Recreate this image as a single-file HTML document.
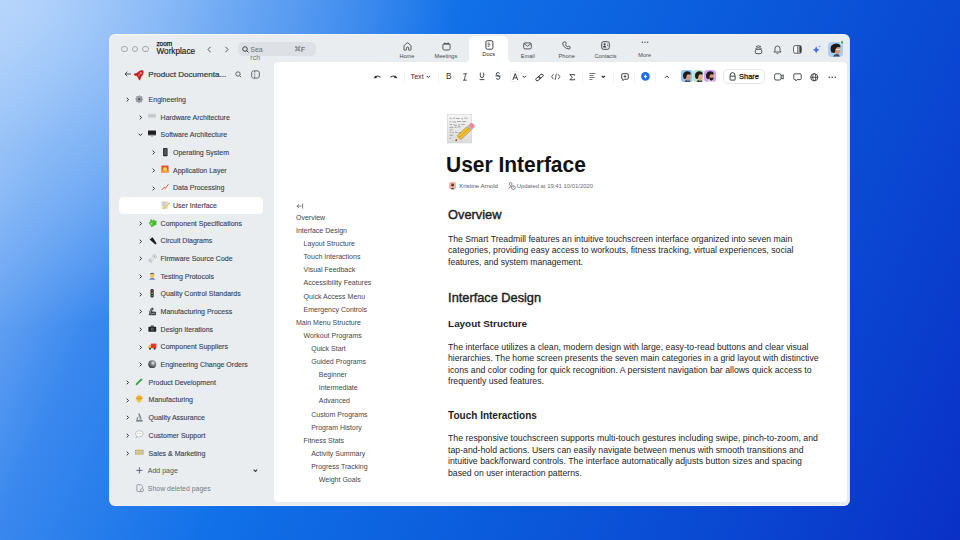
<!DOCTYPE html><html><head><meta charset="utf-8"><style>
*{margin:0;padding:0;box-sizing:border-box}
html,body{width:960px;height:540px;overflow:hidden}
body{font-family:"Liberation Sans",sans-serif;position:relative;
background:radial-gradient(ellipse 460px 330px at 0 0,rgba(184,214,252,0.85) 0%,rgba(160,200,248,0.55) 45%,rgba(140,190,246,0) 100%),linear-gradient(115deg,#b2d3fb 0%,#6ca6f3 10%,#3a88ee 20%,#1170e8 38%,#0b5cdc 60%,#0a48d2 80%,#0a30c6 100%)}
.t{position:absolute;white-space:nowrap;line-height:1}
.abs{position:absolute}
#win{position:absolute;left:110.3px;top:34.6px;width:739.2px;height:470.9px;background:#e9edf0;border-radius:5px;box-shadow:0 0 0 0.9px rgba(255,251,236,0.95)}
#panel{position:absolute;left:273.7px;top:62.2px;width:573px;height:440px;background:#fff;border-radius:4px;box-shadow:0 0 1.5px rgba(0,0,0,0.06)}
svg{position:absolute;overflow:visible}
</style></head><body>
<div id="win"></div>
<div id="panel"></div>
<div class="abs" style="left:121.45px;top:45.70px;width:6.60px;height:6.60px;border-radius:50%;border:0.8px solid #a3a7ad"></div>
<div class="abs" style="left:131.70px;top:45.70px;width:6.60px;height:6.60px;border-radius:50%;border:0.8px solid #a3a7ad"></div>
<div class="abs" style="left:141.95px;top:45.70px;width:6.60px;height:6.60px;border-radius:50%;border:0.8px solid #a3a7ad"></div>
<div class="t" style="left:156.40px;top:41.09px;font-size:6.5px;color:#1a1a1a;font-weight:normal;-webkit-text-stroke:0.25px #1a1a1a;letter-spacing:-0.05px">zoom</div>
<div class="t" style="left:156.50px;top:48.25px;font-size:8.2px;color:#1a1a1a;font-weight:normal;-webkit-text-stroke:0.15px #1a1a1a">Workplace</div>
<svg style="left:206.50px;top:46.00px;" width="5" height="7" viewBox="0 0 5 7"><path d="M3.5 0.8 L1 3.5 L3.5 6.2" fill="none" stroke="#3c3f45" stroke-width="0.9"/></svg>
<svg style="left:224.00px;top:46.00px;" width="5" height="7" viewBox="0 0 5 7"><path d="M1.5 0.8 L4 3.5 L1.5 6.2" fill="none" stroke="#3c3f45" stroke-width="0.9"/></svg>
<div class="abs" style="left:238.00px;top:42.00px;width:78.00px;height:14.00px;background:#dde0e5;border-radius:5px"></div>
<svg style="left:241.50px;top:45.50px;" width="7" height="7" viewBox="0 0 7 7"><circle cx="3" cy="3" r="2.3" fill="none" stroke="#30343a" stroke-width="0.9"/><path d="M4.7 4.7 L6.5 6.5" stroke="#30343a" stroke-width="0.9"/></svg>
<div class="t" style="left:250.30px;top:45.67px;font-size:7px;color:#6b7079;font-weight:normal;">Sea</div>
<div class="t" style="left:250.30px;top:53.67px;font-size:7px;color:#6b7079;font-weight:normal;">rch</div>
<svg style="left:295.30px;top:46.20px;" width="5.5" height="5.5" viewBox="0 0 5.5 5.5"><path d="M1.75 1.75 H3.75 V3.75 H1.75 Z" fill="none" stroke="#5f646c" stroke-width="0.6"/><circle cx="1.05" cy="1.05" r="0.7" fill="none" stroke="#5f646c" stroke-width="0.6"/><circle cx="4.45" cy="1.05" r="0.7" fill="none" stroke="#5f646c" stroke-width="0.6"/><circle cx="1.05" cy="4.45" r="0.7" fill="none" stroke="#5f646c" stroke-width="0.6"/><circle cx="4.45" cy="4.45" r="0.7" fill="none" stroke="#5f646c" stroke-width="0.6"/></svg>
<div class="t" style="left:301.00px;top:47.01px;font-size:6.6px;color:#5f646c;font-weight:normal;-webkit-text-stroke:0.15px #5f646c">F</div>
<div class="abs" style="left:469.4px;top:36px;width:38.6px;height:27px;background:#fff;border-radius:5px 5px 0 0"></div>
<div class="abs" style="left:464.4px;top:57.5px;width:5px;height:5px;background:radial-gradient(circle at 0 0, transparent 4.6px, #fff 5px)"></div>
<div class="abs" style="left:508px;top:57.5px;width:5px;height:5px;background:radial-gradient(circle at 100% 0, transparent 4.6px, #fff 5px)"></div>
<div class="t" style="left:399.43px;top:54.16px;font-size:5.6px;color:#464a50;font-weight:normal;">Home</div>
<div class="t" style="left:434.54px;top:54.16px;font-size:5.6px;color:#464a50;font-weight:normal;">Meetings</div>
<div class="t" style="left:482.37px;top:51.86px;font-size:5.6px;color:#25282d;font-weight:normal;">Docs</div>
<div class="t" style="left:520.80px;top:54.16px;font-size:5.6px;color:#464a50;font-weight:normal;">Email</div>
<div class="t" style="left:558.60px;top:54.16px;font-size:5.6px;color:#464a50;font-weight:normal;">Phone</div>
<div class="t" style="left:594.45px;top:54.16px;font-size:5.6px;color:#464a50;font-weight:normal;">Contacts</div>
<div class="t" style="left:638.32px;top:52.76px;font-size:5.6px;color:#464a50;font-weight:normal;">More</div>
<svg style="left:402.50px;top:41.60px;" width="9" height="9" viewBox="0 0 9 9"><path d="M1 7.6 V4 Q1 3.5 1.4 3.2 L4 1 Q4.5 0.6 5 1 L7.6 3.2 Q8 3.5 8 4 V7.6 Q8 8.2 7.4 8.2 H6 Q5.6 8.2 5.6 7.8 V6.1 Q5.6 5 4.5 5 Q3.4 5 3.4 6.1 V7.8 Q3.4 8.2 3 8.2 H1.6 Q1 8.2 1 7.6 Z" fill="none" stroke="#3c3f45" stroke-width="0.85" stroke-linejoin="round"/></svg>
<svg style="left:441.50px;top:41.80px;" width="9" height="9" viewBox="0 0 9 9"><rect x="0.9" y="1.6" width="7.2" height="6.4" rx="1.6" fill="none" stroke="#3c3f45" stroke-width="0.9"/><path d="M1.6 2.4 H7.4" stroke="#3c3f45" stroke-width="0.6"/><path d="M2.8 0.5 V2 M6.2 0.5 V2" stroke="#3c3f45" stroke-width="0.9"/></svg>
<svg style="left:484.50px;top:39.80px;" width="9" height="10" viewBox="0 0 9 10"><rect x="0.9" y="0.7" width="7" height="8.5" rx="1.4" fill="none" stroke="#2a2d33" stroke-width="0.9"/><path d="M2.6 3.1 H4.6 M2.6 4.7 H5.4 M2.6 6.3 H4.6" stroke="#2a2d33" stroke-width="0.75"/></svg>
<svg style="left:523.30px;top:42.00px;" width="9" height="8" viewBox="0 0 9 8"><rect x="0.7" y="0.9" width="7.6" height="6" rx="1.3" fill="none" stroke="#3c3f45" stroke-width="0.85"/><path d="M1 1.6 L4.5 4.2 L8 1.6" fill="none" stroke="#3c3f45" stroke-width="0.85"/></svg>
<svg style="left:562.20px;top:41.30px;" width="9" height="9" viewBox="0 0 9 9"><path d="M2.4 0.9 L3.5 0.9 L4.3 2.9 L3.4 3.8 Q4.1 5.2 5.4 5.9 L6.2 5 L8.1 5.8 V6.9 Q8.1 8 7 8 Q4.2 7.8 2.4 6 Q0.8 4.4 0.8 2.4 Q0.8 0.9 2.4 0.9 Z" fill="none" stroke="#3c3f45" stroke-width="0.85" stroke-linejoin="round"/></svg>
<svg style="left:601.00px;top:41.30px;" width="9" height="9" viewBox="0 0 9 9"><rect x="0.7" y="0.7" width="7.6" height="7.6" rx="1.8" fill="none" stroke="#3c3f45" stroke-width="0.95"/><circle cx="3.6" cy="3.4" r="1.05" fill="#3c3f45"/><path d="M1.8 6.6 Q2 4.8 3.6 4.8 Q5.2 4.8 5.4 6.6 Z" fill="#3c3f45"/><path d="M6 3.2 H7 M6 4.6 H7" stroke="#3c3f45" stroke-width="0.6"/></svg>
<svg style="left:640.70px;top:41.20px;" width="8" height="3" viewBox="0 0 8 3"><circle cx="1.3" cy="1.3" r="0.7" fill="#3c3f45"/><circle cx="4" cy="1.3" r="0.7" fill="#3c3f45"/><circle cx="6.7" cy="1.3" r="0.7" fill="#3c3f45"/></svg>
<svg style="left:753.80px;top:45.00px;" width="9" height="10" viewBox="0 0 9 10"><path d="M2 1.6 Q4.5 0 7 1.6" fill="none" stroke="#3c3f45" stroke-width="0.85"/><path d="M1.4 3.4 Q4.5 1.9 7.6 3.4" fill="none" stroke="#3c3f45" stroke-width="0.85"/><rect x="1.2" y="4.3" width="6.6" height="4.4" rx="1.8" fill="none" stroke="#3c3f45" stroke-width="0.85"/></svg>
<svg style="left:773.30px;top:44.60px;" width="9" height="10" viewBox="0 0 9 10"><path d="M0.9 7 H8.1 L7 5.6 V3.6 Q7 1 4.5 1 Q2 1 2 3.6 V5.6 Z" fill="none" stroke="#3c3f45" stroke-width="0.85" stroke-linejoin="round"/><path d="M3.6 8.4 Q4.5 9 5.4 8.4" fill="none" stroke="#3c3f45" stroke-width="0.85"/></svg>
<svg style="left:792.80px;top:45.20px;" width="9" height="9" viewBox="0 0 9 9"><defs><linearGradient id="pgr" x1="0" x2="1"><stop offset="0" stop-color="#f4f4f4"/><stop offset="1" stop-color="#1e1f22"/></linearGradient></defs><rect x="0.6" y="0.6" width="7.8" height="7.6" rx="1.6" fill="#fff" stroke="#3c3f45" stroke-width="0.85"/><rect x="4.5" y="1" width="3.5" height="6.8" fill="url(#pgr)"/><path d="M4.5 0.6 V8.2" stroke="#3c3f45" stroke-width="0.6"/></svg>
<svg style="left:811.60px;top:45.00px;" width="10" height="9" viewBox="0 0 10 9"><path d="M4.2 1.2 Q4.7 4.2 7.6 4.8 Q4.7 5.4 4.2 8.4 Q3.7 5.4 0.8 4.8 Q3.7 4.2 4.2 1.2 Z" fill="#3d6df2"/><path d="M7.6 0.2 Q7.8 1.2 8.8 1.4 Q7.8 1.6 7.6 2.6 Q7.4 1.6 6.4 1.4 Q7.4 1.2 7.6 0.2Z" fill="#7aa0f6"/></svg>
<div class="abs" style="left:828.20px;top:42.00px;width:14.80px;height:14.50px;background:#a9cdf7;border-radius:4px"></div>
<svg style="left:828.20px;top:42.00px;" width="14.8" height="14.5" viewBox="0 0 14.8 14.5"><path d="M5 14.5 Q6 11.8 9 11.9 Q11.6 12 12 14.5 Z" fill="#3a4a6a"/><ellipse cx="9.2" cy="8.2" rx="3.1" ry="3.7" fill="#d9956e"/><path d="M3.4 10.6 Q1.6 5.4 3.8 3.2 Q7 0.6 10.8 2 Q13 3 12.4 5.4 Q9.6 4.4 8.2 6 Q7.4 8.4 6.6 11 Z" fill="#1d1a19"/><path d="M7.6 7.6 H12.4" stroke="#eaeaea" stroke-width="0.9"/></svg>
<div class="abs" style="left:839.60px;top:40.40px;width:4.60px;height:4.60px;background:#2fb44a;border-radius:50%;border:0.7px solid #e9edf0"></div>
<svg style="left:372.80px;top:73.00px;" width="9" height="7" viewBox="0 0 9 7"><path d="M2.6 3.9 Q5 1.8 7.4 4.3" fill="none" stroke="#2c2f34" stroke-width="1.05"/><path d="M0.6 5.2 L2.4 2.4 L4 5 Z" fill="#2c2f34"/></svg>
<svg style="left:388.60px;top:73.00px;" width="9" height="7" viewBox="0 0 9 7"><path d="M6.4 3.9 Q4 1.8 1.6 4.3" fill="none" stroke="#2c2f34" stroke-width="1.05"/><path d="M8.4 5.2 L6.6 2.4 L5 5 Z" fill="#2c2f34"/></svg>
<div class="abs" style="left:403.50px;top:71.00px;width:0.60px;height:11.50px;background:#f1f2f4"></div>
<div class="t" style="left:410.60px;top:73.89px;font-size:7.1px;color:#2c2f34;font-weight:normal;">Text</div>
<svg style="left:425.50px;top:75.00px;" width="5" height="4" viewBox="0 0 5 4"><path d="M0.7 0.9 L2.3 2.5 L3.9 0.9" fill="none" stroke="#2c2f34" stroke-width="1.0"/></svg>
<div class="abs" style="left:438.30px;top:71.00px;width:0.60px;height:11.50px;background:#f1f2f4"></div>
<div class="t" style="left:445.90px;top:73.15px;font-size:8.2px;color:#2c2f34;font-weight:normal;">B</div>
<svg style="left:462.00px;top:72.60px;" width="6" height="8" viewBox="0 0 6 8"><path d="M1.2 0.8 H5 M1 7.2 H4.8 M3.6 0.8 L2.4 7.2" fill="none" stroke="#2c2f34" stroke-width="0.8"/></svg>
<svg style="left:478.50px;top:72.40px;" width="6" height="8.5" viewBox="0 0 6 8.5"><path d="M1.3 0.6 V3.8 Q1.3 5.6 3 5.6 Q4.7 5.6 4.7 3.8 V0.6 M0.6 7.6 H5.4" fill="none" stroke="#2c2f34" stroke-width="0.85"/></svg>
<svg style="left:494.50px;top:72.40px;" width="6" height="8.5" viewBox="0 0 6 8.5"><path d="M4.8 1.6 Q4 0.6 3 0.6 Q1.2 0.6 1.2 2.1 Q1.2 3.3 3 3.6 Q4.9 4 4.9 5.6 Q4.9 7.3 3 7.3 Q1.8 7.3 1 6.3 M0.4 4 H5.6" fill="none" stroke="#2c2f34" stroke-width="0.85"/></svg>
<div class="abs" style="left:510.00px;top:71.30px;width:9.20px;height:10.50px;border:0.6px solid #eef0f3;border-radius:2px;background:#fff"></div>
<svg style="left:511.50px;top:72.80px;" width="6.5" height="7.5" viewBox="0 0 6.5 7.5"><path d="M0.8 7 L3.25 0.6 L5.7 7 M1.7 4.8 H4.8" fill="none" stroke="#2c2f34" stroke-width="0.9"/></svg>
<svg style="left:521.70px;top:75.00px;" width="5" height="4" viewBox="0 0 5 4"><path d="M0.7 0.9 L2.3 2.5 L3.9 0.9" fill="none" stroke="#2c2f34" stroke-width="1.0"/></svg>
<svg style="left:534.50px;top:72.50px;" width="9" height="9" viewBox="0 0 9 9"><g transform="rotate(-40 4.5 4.5)" fill="none" stroke="#2c2f34" stroke-width="0.9"><rect x="0.1" y="3.1" width="5" height="2.8" rx="1.4"/><rect x="3.9" y="3.1" width="5" height="2.8" rx="1.4"/></g></svg>
<svg style="left:551.00px;top:73.00px;" width="9.5" height="7.5" viewBox="0 0 9.5 7.5"><path d="M2.4 1.2 L0.6 3.7 L2.4 6.2 M7.1 1.2 L8.9 3.7 L7.1 6.2 M5.3 0.6 L4.2 6.8" fill="none" stroke="#2c2f34" stroke-width="0.8"/></svg>
<svg style="left:568.80px;top:73.60px;" width="7" height="7" viewBox="0 0 7 7"><path d="M5.6 1.6 V0.6 H0.9 L3.3 3.2 L0.9 5.8 H5.6 V4.8" fill="none" stroke="#2c2f34" stroke-width="0.9"/></svg>
<div class="abs" style="left:582.30px;top:71.00px;width:0.60px;height:11.50px;background:#f1f2f4"></div>
<svg style="left:589.00px;top:73.00px;" width="8" height="8" viewBox="0 0 8 8"><path d="M0.5 0.5 H6.5 M0.5 2.5 H4.5 M0.5 4.5 H5.5 M0.5 6.5 H3.5" stroke="#50545a" stroke-width="0.8"/></svg>
<svg style="left:600.70px;top:75.00px;" width="5" height="4" viewBox="0 0 5 4"><path d="M0.7 0.8 L2.3 2.4 L3.9 0.8" fill="none" stroke="#2c2f34" stroke-width="1.15"/></svg>
<div class="abs" style="left:613.30px;top:71.00px;width:0.60px;height:11.50px;background:#f1f2f4"></div>
<svg style="left:620.60px;top:72.60px;" width="8" height="8.5" viewBox="0 0 8 8.5"><path d="M1.9 0.7 H6.1 Q7.3 0.7 7.3 1.9 V5 Q7.3 6.2 6.1 6.2 H3.3 L1.9 7.6 V6.2 Q0.7 6.2 0.7 5 V1.9 Q0.7 0.7 1.9 0.7 Z" fill="none" stroke="#2c2f34" stroke-width="0.9" stroke-linejoin="round"/><path d="M4 2.1 V4.8 M2.65 3.45 H5.35" stroke="#2c2f34" stroke-width="0.8"/></svg>
<div class="abs" style="left:634.20px;top:71.00px;width:0.60px;height:11.50px;background:#f1f2f4"></div>
<svg style="left:640.60px;top:72.10px;" width="9" height="9" viewBox="0 0 9 9"><circle cx="4.4" cy="4.4" r="4.3" fill="#1f6ced"/><path d="M4.4 2 Q4.6 4.2 6.4 4.4 Q4.6 4.6 4.4 6.8 Q4.2 4.6 2.4 4.4 Q4.2 4.2 4.4 2Z" fill="#fff"/></svg>
<div class="abs" style="left:655.40px;top:71.00px;width:0.60px;height:11.50px;background:#f1f2f4"></div>
<svg style="left:663.50px;top:74.60px;" width="6" height="4" viewBox="0 0 6 4"><path d="M0.9 2.9 L2.9 0.9 L4.9 2.9" fill="none" stroke="#2c2f34" stroke-width="0.95"/></svg>
<div class="abs" style="left:681.00px;top:70.20px;width:11.50px;height:12.00px;background:#93c2f6;border-radius:3px;box-shadow:0 0 0 0.5px #fff"></div>
<svg style="left:681.00px;top:70.20px;" width="11.5" height="12" viewBox="0 0 11.5 12"><path d="M3.4499999999999997 12 Q4.6000000000000005 9.600000000000001 7.13 9.84 Q9.200000000000001 10.32 9.43 12 Z" fill="#3a4a6a"/><path d="M5.175 9.36 L7.13 11.399999999999999 L8.28 9.36 Z" fill="#d9956e"/><ellipse cx="6.8999999999999995" cy="6.6000000000000005" rx="2.76" ry="3.3600000000000003" fill="#d9956e"/><path d="M2.875 8.64 Q0.92 4.800000000000001 3.22 2.4000000000000004 Q5.75 0.24 8.625 1.7999999999999998 Q10.35 3.0 9.43 4.800000000000001 Q6.8999999999999995 3.5999999999999996 5.98 5.04 Q5.29 7.4399999999999995 4.6000000000000005 9.0 Z" fill="#1d1a19"/><path d="M5.75 6.0 H9.89" stroke="#d0d0d0" stroke-width="0.6"/></svg>
<div class="abs" style="left:692.60px;top:70.20px;width:11.50px;height:12.00px;background:#b2e8c8;border-radius:3px;box-shadow:0 0 0 0.5px #fff"></div>
<svg style="left:692.60px;top:70.20px;" width="11.5" height="12" viewBox="0 0 11.5 12"><path d="M3.4499999999999997 12 Q4.6000000000000005 9.600000000000001 7.13 9.84 Q9.200000000000001 10.32 9.43 12 Z" fill="#3a3a3a"/><path d="M5.175 9.36 L7.13 11.399999999999999 L8.28 9.36 Z" fill="#e7a882"/><ellipse cx="6.8999999999999995" cy="6.6000000000000005" rx="2.76" ry="3.3600000000000003" fill="#e7a882"/><path d="M2.875 8.64 Q0.92 4.800000000000001 3.22 2.4000000000000004 Q5.75 0.24 8.625 1.7999999999999998 Q10.35 3.0 9.43 4.800000000000001 Q6.8999999999999995 3.5999999999999996 5.98 5.04 Q5.29 7.4399999999999995 4.6000000000000005 9.0 Z" fill="#1d1a19"/><path d="M5.75 6.0 H9.89" stroke="#d0d0d0" stroke-width="0.6"/></svg>
<div class="abs" style="left:704.20px;top:70.20px;width:11.50px;height:12.00px;background:#cfa8f0;border-radius:3px;box-shadow:0 0 0 0.5px #fff"></div>
<svg style="left:704.20px;top:70.20px;" width="11.5" height="12" viewBox="0 0 11.5 12"><path d="M3.4499999999999997 12 Q4.6000000000000005 9.600000000000001 7.13 9.84 Q9.200000000000001 10.32 9.43 12 Z" fill="#e9e6e2"/><path d="M5.175 9.36 L7.13 11.399999999999999 L8.28 9.36 Z" fill="#dc9a72"/><ellipse cx="6.8999999999999995" cy="6.6000000000000005" rx="2.76" ry="3.3600000000000003" fill="#dc9a72"/><path d="M2.875 8.64 Q0.92 4.800000000000001 3.22 2.4000000000000004 Q5.75 0.24 8.625 1.7999999999999998 Q10.35 3.0 9.43 4.800000000000001 Q6.8999999999999995 3.5999999999999996 5.98 5.04 Q5.29 7.4399999999999995 4.6000000000000005 9.0 Z" fill="#1d1a19"/><path d="M5.06 6.959999999999999 Q5.75 11.040000000000001 8.049999999999999 10.56 Q9.66 9.600000000000001 9.66 7.199999999999999 Q8.049999999999999 8.64 5.06 6.959999999999999 Z" fill="#1d1a19"/></svg>
<div class="abs" style="left:722.50px;top:69.20px;width:42.70px;height:15.10px;border:0.8px solid #e4e6e9;border-radius:5px;background:#fff"></div>
<svg style="left:729.40px;top:72.40px;" width="7.5" height="8.8" viewBox="0 0 7.5 8.8"><path d="M1.1 7.6 V3.8 Q1.1 0.6 3.6 0.6 Q6.1 0.6 6.1 3.8 V7.6 Q6.1 8.1 5.6 8.1 H1.6 Q1.1 8.1 1.1 7.6 Z M1.1 4.2 H6.1" fill="none" stroke="#2c2f34" stroke-width="0.9" stroke-linejoin="round"/></svg>
<div class="t" style="left:739.10px;top:73.03px;font-size:7.4px;color:#1a1c20;font-weight:normal;-webkit-text-stroke:0.28px #1a1c20">Share</div>
<svg style="left:774.40px;top:73.20px;" width="10" height="8" viewBox="0 0 10 8"><rect x="0.6" y="0.8" width="6.4" height="6.2" rx="1.4" fill="none" stroke="#2c2f34" stroke-width="0.85"/><path d="M7 3 L9.2 1.8 V6 L7 4.8" fill="none" stroke="#2c2f34" stroke-width="0.85" stroke-linejoin="round"/></svg>
<svg style="left:792.80px;top:72.80px;" width="9" height="9" viewBox="0 0 9 9"><path d="M1.8 0.8 H7.2 Q8.2 0.8 8.2 1.8 V5.6 Q8.2 6.6 7.2 6.6 H4.2 L3 7.9 L2.4 6.6 H1.8 Q0.8 6.6 0.8 5.6 V1.8 Q0.8 0.8 1.8 0.8 Z" fill="none" stroke="#2c2f34" stroke-width="0.85" stroke-linejoin="round"/></svg>
<svg style="left:810.40px;top:72.90px;" width="8.5" height="8.5" viewBox="0 0 8.5 8.5"><circle cx="4.25" cy="4.25" r="3.6" fill="none" stroke="#2c2f34" stroke-width="0.9"/><ellipse cx="4.25" cy="4.25" rx="1.5" ry="3.6" fill="none" stroke="#2c2f34" stroke-width="0.8"/><path d="M0.7 4.25 H7.8" stroke="#2c2f34" stroke-width="0.8"/></svg>
<svg style="left:828.20px;top:76.00px;" width="9" height="3" viewBox="0 0 9 3"><circle cx="1.2" cy="1.2" r="0.75" fill="#2c2f34"/><circle cx="4.2" cy="1.2" r="0.75" fill="#2c2f34"/><circle cx="7.2" cy="1.2" r="0.75" fill="#2c2f34"/></svg>
<svg style="left:123.80px;top:71.00px;" width="8" height="6" viewBox="0 0 8 6"><path d="M7 3 H1 M3.3 0.7 L1 3 L3.3 5.3" fill="none" stroke="#3a3f47" stroke-width="0.9"/></svg>
<svg style="left:134.60px;top:69.20px;" width="10" height="10" viewBox="0 0 10 10"><g transform="rotate(-45 5 5)"><path d="M1 5 Q1.2 2 5 2 Q8.6 2.2 9.8 5 Q8.6 7.8 5 8 Q1.2 8 1 5 Z" fill="#c8201f"/><path d="M3.4 2.4 L0.4 0.9 L1 3.6 Z M3.4 7.6 L0.4 9.1 L1 6.4 Z" fill="#c8201f" stroke="#c8201f" stroke-width="0.8" stroke-linejoin="round"/><circle cx="6.2" cy="5" r="0.9" fill="#f4d6d6"/><circle cx="3.6" cy="5" r="0.6" fill="#f4d6d6"/></g></svg>
<div class="t" style="left:148.30px;top:71.27px;font-size:8.06px;color:#343c4a;font-weight:normal;-webkit-text-stroke:0.22px #343c4a">Product Documenta...</div>
<svg style="left:234.80px;top:70.60px;" width="7" height="7" viewBox="0 0 7 7"><circle cx="3" cy="3" r="2.2" fill="none" stroke="#4a4f57" stroke-width="0.85"/><path d="M4.6 4.6 L6.2 6.2" stroke="#4a4f57" stroke-width="0.85"/></svg>
<svg style="left:251.30px;top:69.60px;" width="9" height="9" viewBox="0 0 9 9"><rect x="0.7" y="0.9" width="7.6" height="7.2" rx="1.8" fill="none" stroke="#4a4f57" stroke-width="0.85"/><path d="M3.6 0.9 V8.1" stroke="#4a4f57" stroke-width="0.85"/><rect x="1.4" y="1.6" width="2.2" height="5.8" rx="0.6" fill="#dfe2e6"/></svg>
<div class="abs" style="left:118.90px;top:197.40px;width:144.30px;height:16.50px;background:#fff;border-radius:4.5px"></div>
<svg style="left:125.50px;top:97.10px;" width="4" height="6" viewBox="0 0 4 6"><path d="M0.7 0.7 L2.6 2.5 L0.7 4.3" fill="none" stroke="#30343b" stroke-width="1.0"/></svg>
<svg style="left:135.20px;top:94.50px;" width="9" height="9" viewBox="0 0 9 9"><polygon points="8.20,4.20 8.15,4.83 7.24,5.19 7.05,5.65 6.79,6.08 7.03,7.03 6.55,7.44 5.65,7.05 5.19,7.24 4.70,7.36 4.20,8.20 3.57,8.15 3.21,7.24 2.75,7.05 2.32,6.79 1.37,7.03 0.96,6.55 1.35,5.65 1.16,5.19 1.04,4.70 0.20,4.20 0.25,3.57 1.16,3.21 1.35,2.75 1.61,2.32 1.37,1.37 1.85,0.96 2.75,1.35 3.21,1.16 3.70,1.04 4.20,0.20 4.83,0.25 5.19,1.16 5.65,1.35 6.08,1.61 7.03,1.37 7.44,1.85 7.05,2.75 7.24,3.21 7.36,3.70" fill="#8e9196"/><circle cx="4.2" cy="4.2" r="2.3" fill="#a9acb1"/><circle cx="4.2" cy="4.2" r="1.2" fill="#55585d"/></svg>
<div class="t" style="left:148.60px;top:95.92px;font-size:7.0px;color:#3a4250;font-weight:normal;-webkit-text-stroke:0.12px #3a4250">Engineering</div>
<svg style="left:138.80px;top:114.78px;" width="4" height="6" viewBox="0 0 4 6"><path d="M0.7 0.7 L2.6 2.5 L0.7 4.3" fill="none" stroke="#30343b" stroke-width="1.0"/></svg>
<svg style="left:147.80px;top:112.18px;" width="9" height="9" viewBox="0 0 9 9"><rect x="0" y="1.8" width="8" height="4" rx="0.6" fill="#cfd1d4"/><path d="M0.8 3.2 H7.2 M0.8 4.6 H7.2" stroke="#b5b8bc" stroke-width="0.5"/></svg>
<div class="t" style="left:160.60px;top:113.60px;font-size:7.0px;color:#3a4250;font-weight:normal;-webkit-text-stroke:0.12px #3a4250">Hardware Architecture</div>
<svg style="left:138.00px;top:133.36px;" width="6" height="4" viewBox="0 0 6 4"><path d="M0.6 0.7 L2.4 2.5 L4.2 0.7" fill="none" stroke="#30343b" stroke-width="1.0"/></svg>
<svg style="left:147.80px;top:129.86px;" width="9" height="9" viewBox="0 0 9 9"><rect x="0" y="0.5" width="8" height="5.3" rx="0.4" fill="#1e1e20"/><rect x="0" y="4.8" width="8" height="1" fill="#c9cbce"/><path d="M3.4 5.8 H4.6 V7 H3.4Z" fill="#8a8c90"/></svg>
<div class="t" style="left:160.60px;top:131.28px;font-size:7.0px;color:#3a4250;font-weight:normal;-webkit-text-stroke:0.12px #3a4250">Software Architecture</div>
<svg style="left:151.60px;top:150.14px;" width="4" height="6" viewBox="0 0 4 6"><path d="M0.7 0.7 L2.6 2.5 L0.7 4.3" fill="none" stroke="#30343b" stroke-width="1.0"/></svg>
<svg style="left:160.80px;top:147.54px;" width="9" height="9" viewBox="0 0 9 9"><rect x="2" y="0" width="4.6" height="8.2" rx="0.8" fill="#2a2b2e"/><rect x="2.7" y="0.9" width="3.2" height="6.2" fill="#505257"/></svg>
<div class="t" style="left:173.00px;top:148.96px;font-size:7.0px;color:#3a4250;font-weight:normal;-webkit-text-stroke:0.12px #3a4250">Operating System</div>
<svg style="left:151.60px;top:167.82px;" width="4" height="6" viewBox="0 0 4 6"><path d="M0.7 0.7 L2.6 2.5 L0.7 4.3" fill="none" stroke="#30343b" stroke-width="1.0"/></svg>
<svg style="left:160.80px;top:165.22px;" width="9" height="9" viewBox="0 0 9 9"><rect x="0.4" y="0.6" width="7.2" height="6.8" rx="0.5" fill="#e2592c"/><circle cx="4" cy="4.3" r="2" fill="#ffd34a"/><rect x="0.4" y="5.4" width="7.2" height="2" fill="#f0a040"/></svg>
<div class="t" style="left:173.00px;top:166.64px;font-size:7.0px;color:#3a4250;font-weight:normal;-webkit-text-stroke:0.12px #3a4250">Application Layer</div>
<svg style="left:151.60px;top:185.50px;" width="4" height="6" viewBox="0 0 4 6"><path d="M0.7 0.7 L2.6 2.5 L0.7 4.3" fill="none" stroke="#30343b" stroke-width="1.0"/></svg>
<svg style="left:160.80px;top:182.90px;" width="9" height="9" viewBox="0 0 9 9"><rect x="0.4" y="0.4" width="7.4" height="7.4" fill="#f4f4f4"/><path d="M0.8 7 L3 4.4 L4.4 5.4 L7.4 1.2" fill="none" stroke="#d8352a" stroke-width="0.9"/></svg>
<div class="t" style="left:173.00px;top:184.32px;font-size:7.0px;color:#3a4250;font-weight:normal;-webkit-text-stroke:0.12px #3a4250">Data Processing</div>
<svg style="left:160.80px;top:200.58px;" width="9" height="9" viewBox="0 0 9 9"><rect x="0.3" y="0.2" width="6.8" height="7.8" fill="#e4e4e4"/><path d="M1.2 1.6 H5.6 M1.2 3 H5 M1.2 4.4 H4" stroke="#8a8a8a" stroke-width="0.35"/><path d="M2.2 7.2 L7.4 2 L8.3 2.9 L3.1 8.1 L1.8 8.4 Z" fill="#f3bf2a"/><path d="M7.4 2 L8 1.4 L8.9 2.3 L8.3 2.9Z" fill="#e06a6a"/></svg>
<div class="t" style="left:173.00px;top:202.00px;font-size:7.0px;color:#3a4250;font-weight:normal;-webkit-text-stroke:0.12px #3a4250">User Interface</div>
<svg style="left:138.80px;top:220.86px;" width="4" height="6" viewBox="0 0 4 6"><path d="M0.7 0.7 L2.6 2.5 L0.7 4.3" fill="none" stroke="#30343b" stroke-width="1.0"/></svg>
<svg style="left:147.80px;top:218.26px;" width="9" height="9" viewBox="0 0 9 9"><g transform="rotate(-30 4.5 4.5)"><path d="M1.2 2.6 H3.2 Q3 1 4.3 1 Q5.6 1 5.4 2.6 H7.4 V4.4 Q8.8 4.2 8.8 5.5 Q8.8 6.8 7.4 6.6 V8.2 H1.2 Z" fill="#4fbf3a"/><circle cx="3" cy="5" r="0.9" fill="#a6e36a"/><circle cx="5.6" cy="6.6" r="0.7" fill="#2f8f2a"/></g></svg>
<div class="t" style="left:160.60px;top:219.68px;font-size:7.0px;color:#3a4250;font-weight:normal;-webkit-text-stroke:0.12px #3a4250">Component Specifications</div>
<svg style="left:138.80px;top:238.54px;" width="4" height="6" viewBox="0 0 4 6"><path d="M0.7 0.7 L2.6 2.5 L0.7 4.3" fill="none" stroke="#30343b" stroke-width="1.0"/></svg>
<svg style="left:147.80px;top:235.94px;" width="9" height="9" viewBox="0 0 9 9"><path d="M1.6 3.6 L4.6 1.2 L8.6 7.4 L7.4 8.6 Z" fill="#1b1b1d"/><path d="M2.2 2.6 L0.9 1.3 M3.5 1.7 L2.4 0.4" stroke="#e8a060" stroke-width="0.7"/></svg>
<div class="t" style="left:160.60px;top:237.36px;font-size:7.0px;color:#3a4250;font-weight:normal;-webkit-text-stroke:0.12px #3a4250">Circuit Diagrams</div>
<svg style="left:138.80px;top:256.22px;" width="4" height="6" viewBox="0 0 4 6"><path d="M0.7 0.7 L2.6 2.5 L0.7 4.3" fill="none" stroke="#30343b" stroke-width="1.0"/></svg>
<svg style="left:147.80px;top:253.62px;" width="9" height="9" viewBox="0 0 9 9"><g transform="rotate(-45 4.5 4.5)"><rect x="1.4" y="3.6" width="6.2" height="1.8" fill="#f6f6f6" stroke="#8c8f94" stroke-width="0.45"/><circle cx="1.2" cy="3.6" r="1" fill="#f6f6f6" stroke="#8c8f94" stroke-width="0.45"/><circle cx="1.2" cy="5.4" r="1" fill="#f6f6f6" stroke="#8c8f94" stroke-width="0.45"/><circle cx="7.8" cy="3.6" r="1" fill="#f6f6f6" stroke="#8c8f94" stroke-width="0.45"/><circle cx="7.8" cy="5.4" r="1" fill="#f6f6f6" stroke="#8c8f94" stroke-width="0.45"/></g></svg>
<div class="t" style="left:160.60px;top:255.04px;font-size:7.0px;color:#3a4250;font-weight:normal;-webkit-text-stroke:0.12px #3a4250">Firmware Source Code</div>
<svg style="left:138.80px;top:273.90px;" width="4" height="6" viewBox="0 0 4 6"><path d="M0.7 0.7 L2.6 2.5 L0.7 4.3" fill="none" stroke="#30343b" stroke-width="1.0"/></svg>
<svg style="left:147.80px;top:271.30px;" width="9" height="9" viewBox="0 0 9 9"><path d="M1.6 3.2 Q4.2 0.2 6.8 3.2 Z" fill="#1e2d57"/><circle cx="4.2" cy="2.2" r="0.5" fill="#f0c030"/><ellipse cx="4.2" cy="4.9" rx="2.1" ry="1.9" fill="#f6c441"/><path d="M1 8.6 Q4.2 6 7.4 8.6 Z" fill="#2d4fa8"/></svg>
<div class="t" style="left:160.60px;top:272.72px;font-size:7.0px;color:#3a4250;font-weight:normal;-webkit-text-stroke:0.12px #3a4250">Testing Protocols</div>
<svg style="left:138.80px;top:291.58px;" width="4" height="6" viewBox="0 0 4 6"><path d="M0.7 0.7 L2.6 2.5 L0.7 4.3" fill="none" stroke="#30343b" stroke-width="1.0"/></svg>
<svg style="left:147.80px;top:288.98px;" width="9" height="9" viewBox="0 0 9 9"><rect x="2.5" y="0" width="3.2" height="8.4" rx="1.2" fill="#2a2b2e"/><circle cx="4.1" cy="1.6" r="0.8" fill="#e43b2e"/><circle cx="4.1" cy="4.2" r="0.8" fill="#f5c32c"/><circle cx="4.1" cy="6.8" r="0.8" fill="#3fbf52"/></svg>
<div class="t" style="left:160.60px;top:290.40px;font-size:7.0px;color:#3a4250;font-weight:normal;-webkit-text-stroke:0.12px #3a4250">Quality Control Standards</div>
<svg style="left:138.80px;top:309.26px;" width="4" height="6" viewBox="0 0 4 6"><path d="M0.7 0.7 L2.6 2.5 L0.7 4.3" fill="none" stroke="#30343b" stroke-width="1.0"/></svg>
<svg style="left:147.80px;top:306.66px;" width="9" height="9" viewBox="0 0 9 9"><path d="M0.8 8.2 L1.4 4.4 Q2.2 1.2 4.8 0.6 L5.8 2 L4.2 3.4 L4.4 4.8 Q6.8 3.8 8.2 5.6 L7.8 8.2 Z" fill="#3a3c40"/><path d="M2 7.2 L2.4 4.8 Q3 2.6 4.4 1.8 M3 7.2 Q5 5.6 7.2 6.6" stroke="#d8dadd" stroke-width="0.55" fill="none"/></svg>
<div class="t" style="left:160.60px;top:308.08px;font-size:7.0px;color:#3a4250;font-weight:normal;-webkit-text-stroke:0.12px #3a4250">Manufacturing Process</div>
<svg style="left:138.80px;top:326.94px;" width="4" height="6" viewBox="0 0 4 6"><path d="M0.7 0.7 L2.6 2.5 L0.7 4.3" fill="none" stroke="#30343b" stroke-width="1.0"/></svg>
<svg style="left:147.80px;top:324.34px;" width="9" height="9" viewBox="0 0 9 9"><rect x="0.4" y="2.8" width="7.8" height="5" rx="0.6" fill="#222326"/><path d="M2.4 2.8 L3 1.6 H5.6 L6.2 2.8 Z" fill="#3a3b3f"/><circle cx="4.3" cy="5.3" r="1.5" fill="#6d6f74"/><circle cx="4.3" cy="5.3" r="0.7" fill="#2a2b2e"/></svg>
<div class="t" style="left:160.60px;top:325.76px;font-size:7.0px;color:#3a4250;font-weight:normal;-webkit-text-stroke:0.12px #3a4250">Design Iterations</div>
<svg style="left:138.80px;top:344.62px;" width="4" height="6" viewBox="0 0 4 6"><path d="M0.7 0.7 L2.6 2.5 L0.7 4.3" fill="none" stroke="#30343b" stroke-width="1.0"/></svg>
<svg style="left:147.80px;top:342.02px;" width="9" height="9" viewBox="0 0 9 9"><rect x="2.8" y="1.6" width="5.6" height="4.6" fill="#e03a2c"/><path d="M2.8 3 H1.2 L0.2 4.6 V6.2 H2.8 Z" fill="#f2b33a"/><circle cx="2" cy="6.7" r="1" fill="#333"/><circle cx="6.6" cy="6.7" r="1" fill="#333"/></svg>
<div class="t" style="left:160.60px;top:343.44px;font-size:7.0px;color:#3a4250;font-weight:normal;-webkit-text-stroke:0.12px #3a4250">Component Suppliers</div>
<svg style="left:138.80px;top:362.30px;" width="4" height="6" viewBox="0 0 4 6"><path d="M0.7 0.7 L2.6 2.5 L0.7 4.3" fill="none" stroke="#30343b" stroke-width="1.0"/></svg>
<svg style="left:147.80px;top:359.70px;" width="9" height="9" viewBox="0 0 9 9"><defs><radialGradient id="bg1" cx="0.6" cy="0.35" r="0.75"><stop offset="0" stop-color="#f0f0f0"/><stop offset="0.35" stop-color="#8a8d92"/><stop offset="1" stop-color="#2a2c30"/></radialGradient></defs><circle cx="4.2" cy="4.2" r="3.9" fill="url(#bg1)"/></svg>
<div class="t" style="left:160.60px;top:361.12px;font-size:7.0px;color:#3a4250;font-weight:normal;-webkit-text-stroke:0.12px #3a4250">Engineering Change Orders</div>
<svg style="left:125.50px;top:379.98px;" width="4" height="6" viewBox="0 0 4 6"><path d="M0.7 0.7 L2.6 2.5 L0.7 4.3" fill="none" stroke="#30343b" stroke-width="1.0"/></svg>
<svg style="left:135.20px;top:377.38px;" width="9" height="9" viewBox="0 0 9 9"><path d="M6.4 1 L7.8 2.4 L2.6 7.6 Q1.6 8.6 0.9 7.9 Q0.2 7.2 1.2 6.2 Z" fill="#3aa646"/><path d="M6 0.6 L8.2 2.8" stroke="#e6e8ea" stroke-width="1"/></svg>
<div class="t" style="left:148.60px;top:378.80px;font-size:7.0px;color:#3a4250;font-weight:normal;-webkit-text-stroke:0.12px #3a4250">Product Development</div>
<svg style="left:125.50px;top:397.66px;" width="4" height="6" viewBox="0 0 4 6"><path d="M0.7 0.7 L2.6 2.5 L0.7 4.3" fill="none" stroke="#30343b" stroke-width="1.0"/></svg>
<svg style="left:135.20px;top:395.06px;" width="9" height="9" viewBox="0 0 9 9"><ellipse cx="4.2" cy="5.2" rx="2.4" ry="2.4" fill="#f6c441"/><path d="M1.2 3.8 Q1.4 0.6 4.2 0.6 Q7 0.6 7.2 3.8 Z" fill="#f3b51f" stroke="#d08a10" stroke-width="0.3"/><path d="M0.8 3.8 H7.6" stroke="#d08a10" stroke-width="0.6"/></svg>
<div class="t" style="left:148.60px;top:396.48px;font-size:7.0px;color:#3a4250;font-weight:normal;-webkit-text-stroke:0.12px #3a4250">Manufacturing</div>
<svg style="left:125.50px;top:415.34px;" width="4" height="6" viewBox="0 0 4 6"><path d="M0.7 0.7 L2.6 2.5 L0.7 4.3" fill="none" stroke="#30343b" stroke-width="1.0"/></svg>
<svg style="left:135.20px;top:412.74px;" width="9" height="9" viewBox="0 0 9 9"><path d="M3.2 0.8 L4.6 0.3 L6.4 5 L5 5.5 Z" fill="#7e858e"/><rect x="1.2" y="7.4" width="6.4" height="1" fill="#3d444d"/><path d="M2.2 7.4 Q1.6 4.6 3.6 3.6" fill="none" stroke="#5a626c" stroke-width="0.9"/><rect x="4.4" y="5.6" width="2.4" height="0.8" fill="#5a626c"/></svg>
<div class="t" style="left:148.60px;top:414.16px;font-size:7.0px;color:#3a4250;font-weight:normal;-webkit-text-stroke:0.12px #3a4250">Quality Assurance</div>
<svg style="left:125.50px;top:433.02px;" width="4" height="6" viewBox="0 0 4 6"><path d="M0.7 0.7 L2.6 2.5 L0.7 4.3" fill="none" stroke="#30343b" stroke-width="1.0"/></svg>
<svg style="left:135.20px;top:430.42px;" width="9" height="9" viewBox="0 0 9 9"><ellipse cx="4.3" cy="3.8" rx="3.8" ry="3.1" fill="#fdfdfd" stroke="#9fa3a8" stroke-width="0.6"/><path d="M1.8 6 L0.9 8 L3.3 6.7" fill="#fdfdfd" stroke="#9fa3a8" stroke-width="0.5" stroke-linejoin="round"/><circle cx="2.7" cy="3.8" r="0.45" fill="#8a8d92"/><circle cx="4.3" cy="3.8" r="0.45" fill="#8a8d92"/><circle cx="5.9" cy="3.8" r="0.45" fill="#8a8d92"/></svg>
<div class="t" style="left:148.60px;top:431.84px;font-size:7.0px;color:#3a4250;font-weight:normal;-webkit-text-stroke:0.12px #3a4250">Customer Support</div>
<svg style="left:125.50px;top:450.70px;" width="4" height="6" viewBox="0 0 4 6"><path d="M0.7 0.7 L2.6 2.5 L0.7 4.3" fill="none" stroke="#30343b" stroke-width="1.0"/></svg>
<svg style="left:135.20px;top:448.10px;" width="9" height="9" viewBox="0 0 9 9"><rect x="0" y="1.6" width="8.6" height="5" fill="#c8ccc0"/><rect x="0.6" y="2.2" width="7.4" height="3.8" fill="none" stroke="#8c9480" stroke-width="0.4"/><rect x="3.4" y="1.6" width="1.8" height="5" fill="#f2c531"/></svg>
<div class="t" style="left:148.60px;top:449.52px;font-size:7.0px;color:#3a4250;font-weight:normal;-webkit-text-stroke:0.12px #3a4250">Sales &amp; Marketing</div>
<svg style="left:135.80px;top:467.00px;" width="7" height="7" viewBox="0 0 7 7"><path d="M3.4 0.3 V6.5 M0.3 3.4 H6.5" stroke="#4f5560" stroke-width="0.85"/></svg>
<div class="t" style="left:147.80px;top:466.87px;font-size:7.0px;color:#4f5663;font-weight:normal;">Add page</div>
<svg style="left:253.30px;top:469.10px;" width="6" height="4" viewBox="0 0 6 4"><path d="M0.6 0.6 L2.4 2.4 L4.2 0.6" fill="none" stroke="#30343b" stroke-width="1.1"/></svg>
<svg style="left:135.50px;top:484.30px;" width="9" height="9" viewBox="0 0 9 9"><path d="M5 7.6 H1.8 Q0.9 7.6 0.9 6.7 V1.6 Q0.9 0.7 1.8 0.7 H4.8 L6.6 2.5 V4" fill="none" stroke="#7d838d" stroke-width="0.75"/><circle cx="6" cy="6.2" r="1.6" fill="none" stroke="#7d838d" stroke-width="0.7"/><path d="M5 7.3 L4.3 8" stroke="#7d838d" stroke-width="0.7"/></svg>
<div class="t" style="left:147.80px;top:486.41px;font-size:6.95px;color:#747b86;font-weight:normal;">Show deleted pages</div>
<svg style="left:295.80px;top:202.60px;" width="8" height="6.5" viewBox="0 0 8 6.5"><path d="M6.6 0.6 V5.6 M5.4 3.1 H1 M2.9 1.2 L1 3.1 L2.9 5" fill="none" stroke="#44474d" stroke-width="0.7"/></svg>
<div class="t" style="left:296.00px;top:213.87px;font-size:7.0px;color:#43464c;font-weight:normal;">Overview</div>
<div class="t" style="left:296.00px;top:226.98px;font-size:7.0px;color:#43464c;font-weight:normal;">Interface Design</div>
<div class="t" style="left:303.60px;top:240.09px;font-size:7.0px;color:#43464c;font-weight:normal;">Layout Structure</div>
<div class="t" style="left:303.60px;top:253.20px;font-size:7.0px;color:#43464c;font-weight:normal;">Touch Interactions</div>
<div class="t" style="left:303.60px;top:266.31px;font-size:7.0px;color:#43464c;font-weight:normal;">Visual Feedback</div>
<div class="t" style="left:303.60px;top:279.42px;font-size:7.0px;color:#43464c;font-weight:normal;">Accessibility Features</div>
<div class="t" style="left:303.60px;top:292.53px;font-size:7.0px;color:#43464c;font-weight:normal;">Quick Access Menu</div>
<div class="t" style="left:303.60px;top:305.64px;font-size:7.0px;color:#43464c;font-weight:normal;">Emergency Controls</div>
<div class="t" style="left:296.00px;top:318.75px;font-size:7.0px;color:#43464c;font-weight:normal;">Main Menu Structure</div>
<div class="t" style="left:303.60px;top:331.86px;font-size:7.0px;color:#43464c;font-weight:normal;">Workout Programs</div>
<div class="t" style="left:311.20px;top:344.97px;font-size:7.0px;color:#43464c;font-weight:normal;">Quick Start</div>
<div class="t" style="left:311.20px;top:358.08px;font-size:7.0px;color:#43464c;font-weight:normal;">Guided Programs</div>
<div class="t" style="left:318.80px;top:371.19px;font-size:7.0px;color:#43464c;font-weight:normal;">Beginner</div>
<div class="t" style="left:318.80px;top:384.30px;font-size:7.0px;color:#43464c;font-weight:normal;">Intermediate</div>
<div class="t" style="left:318.80px;top:397.41px;font-size:7.0px;color:#43464c;font-weight:normal;">Advanced</div>
<div class="t" style="left:311.20px;top:410.52px;font-size:7.0px;color:#43464c;font-weight:normal;">Custom Programs</div>
<div class="t" style="left:311.20px;top:423.63px;font-size:7.0px;color:#43464c;font-weight:normal;">Program History</div>
<div class="t" style="left:303.60px;top:436.74px;font-size:7.0px;color:#43464c;font-weight:normal;">Fitness Stats</div>
<div class="t" style="left:311.20px;top:449.85px;font-size:7.0px;color:#43464c;font-weight:normal;">Activity Summary</div>
<div class="t" style="left:311.20px;top:462.96px;font-size:7.0px;color:#43464c;font-weight:normal;">Progress Tracking</div>
<div class="t" style="left:318.80px;top:476.07px;font-size:7.0px;color:#43464c;font-weight:normal;">Weight Goals</div>
<svg style="left:447.00px;top:113.80px;" width="28" height="30" viewBox="0 0 28 30"><defs><linearGradient id="pg" x1="0" y1="0" x2="0" y2="1"><stop offset="0" stop-color="#f6f6f6"/><stop offset="1" stop-color="#dcdcdc"/></linearGradient></defs><rect x="0.2" y="0.2" width="24.6" height="28.8" fill="url(#pg)" stroke="#cacaca" stroke-width="0.5"/><path d="M2.6 4.4 q1.1 -0.2 2.2 0.1 M6.0 4.1 q0.9 0.5 1.8 -0.1 M8.7 4.4 q2.1 0.5 4.2 -0.0 M14.1 4.5 q1.0 0.6 2.0 0.0 M17.3 4.1 q1.6 0.4 3.2 0.1 M2.6 7.8 q0.8 -0.0 1.7 0.1 M5.6 7.9 q1.7 -0.2 3.5 0.2 M10.1 7.8 q2.0 -0.6 4.0 -0.2 M15.1 7.6 q2.1 0.2 4.1 -0.1 M2.6 10.5 q1.3 0.1 2.6 0.1 M6.5 10.9 q1.7 0.6 3.4 0.3 M11.1 10.8 q1.0 0.7 2.0 0.2 M14.3 10.4 q1.7 0.5 3.5 0.0 M2.6 13.5 q1.9 -0.7 3.8 0.2 M7.5 13.1 q1.0 0.4 2.0 0.2 M10.3 12.9 q1.6 0.3 3.2 -0.1 M2.6 16.1 q1.5 -0.3 2.9 -0.3 M2.6 18.2 q0.8 -0.1 1.7 0.1 M5.2 18.6 q0.9 -0.3 1.7 0.3 M8.2 18.4 q1.3 0.0 2.6 0.1 M12.0 18.5 q1.0 0.7 2.0 0.0 M2.6 21.2 q1.7 -0.3 3.5 0.3 M2.6 24.3 q0.8 0.1 1.6 -0.3 " fill="none" stroke="#3a3a3a" stroke-width="0.42"/><path d="M8.30 27.00 L13.81 25.61 L10.16 21.63 Z" fill="#f2d2a6"/><path d="M8.30 27.00 L10.28 26.50 L8.97 25.07 Z" fill="#222"/><path d="M13.81 25.61 L23.86 16.38 L20.21 12.40 L10.16 21.63 Z" fill="#f6c02e" stroke="#2c4a6a" stroke-width="0.35"/><path d="M11.98 23.62 L22.03 14.39" stroke="#e39d19" stroke-width="1.1"/><path d="M23.86 16.38 L25.18 15.16 L21.53 11.19 L20.21 12.40 Z" fill="#a8b4c4"/><path d="M25.18 15.16 L27.84 12.73 Q28.43 12.19 26.60 10.20 Q24.77 8.21 24.18 8.75 L21.53 11.19 Z" fill="#ec8a8c"/></svg>
<div class="t" style="left:446.00px;top:153.74px;font-size:21.8px;color:#111113;font-weight:bold;transform:scaleX(0.962);transform-origin:0 0">User Interface</div>
<div class="abs" style="left:449.10px;top:182.20px;width:7.00px;height:7.20px;background:#f2b7a8;border-radius:1.5px"></div>
<svg style="left:449.10px;top:182.20px;" width="7" height="7.2" viewBox="0 0 7 7.2"><circle cx="3.6" cy="3" r="1.5" fill="#6b3b2a"/><path d="M1.6 7.2 Q3.5 4.6 5.6 7.2Z" fill="#2a2a3a"/></svg>
<div class="t" style="left:459.20px;top:182.92px;font-size:6.0px;color:#55585e;font-weight:normal;">Kristine Arnold</div>
<svg style="left:507.60px;top:181.80px;" width="8" height="8" viewBox="0 0 8 8"><circle cx="2.6" cy="2" r="1.4" fill="none" stroke="#5a5d63" stroke-width="0.7"/><path d="M0.6 6.8 Q1.4 4.2 4 4.4" fill="none" stroke="#5a5d63" stroke-width="0.7"/><circle cx="5.4" cy="5.6" r="1.9" fill="none" stroke="#5a5d63" stroke-width="0.7"/><path d="M5.4 4.6 V5.7 L6.2 6.2" fill="none" stroke="#5a5d63" stroke-width="0.5"/></svg>
<div class="t" style="left:516.70px;top:183.80px;font-size:5.9px;color:#66696f;font-weight:normal;">Updated at 19:41 10/01/2020</div>
<div class="t" style="left:448.10px;top:209.06px;font-size:12.8px;color:#1d1d1f;font-weight:normal;-webkit-text-stroke:0.4px #1d1d1f">Overview</div>
<div class="t" style="left:448.00px;top:235.03px;font-size:8.7px;color:#242427;font-weight:normal;transform:scaleX(0.9971);transform-origin:0 0">The Smart Treadmill features an intuitive touchscreen interface organized into seven main</div>
<div class="t" style="left:448.00px;top:246.48px;font-size:8.7px;color:#242427;font-weight:normal;transform:scaleX(1.0035);transform-origin:0 0">categories, providing easy access to workouts, fitness tracking, virtual experiences, social</div>
<div class="t" style="left:448.00px;top:257.93px;font-size:8.7px;color:#242427;font-weight:normal;transform:scaleX(0.9907);transform-origin:0 0">features, and system management.</div>
<div class="t" style="left:448.10px;top:291.98px;font-size:12.77px;color:#1d1d1f;font-weight:normal;-webkit-text-stroke:0.4px #1d1d1f">Interface Design</div>
<div class="t" style="left:448.10px;top:318.51px;font-size:9.9px;color:#1d1d1f;font-weight:bold;">Layout Structure</div>
<div class="t" style="left:448.00px;top:342.73px;font-size:8.7px;color:#242427;font-weight:normal;transform:scaleX(1.0034);transform-origin:0 0">The interface utilizes a clean, modern design with large, easy-to-read buttons and clear visual</div>
<div class="t" style="left:448.00px;top:354.18px;font-size:8.7px;color:#242427;font-weight:normal;transform:scaleX(0.9973);transform-origin:0 0">hierarchies. The home screen presents the seven main categories in a grid layout with distinctive</div>
<div class="t" style="left:448.00px;top:365.63px;font-size:8.7px;color:#242427;font-weight:normal;transform:scaleX(1.0052);transform-origin:0 0">icons and color coding for quick recognition. A persistent navigation bar allows quick access to</div>
<div class="t" style="left:448.00px;top:377.08px;font-size:8.7px;color:#242427;font-weight:normal;transform:scaleX(1.0036);transform-origin:0 0">frequently used features.</div>
<div class="t" style="left:448.10px;top:411.03px;font-size:10.0px;color:#1d1d1f;font-weight:bold;">Touch Interactions</div>
<div class="t" style="left:448.00px;top:434.23px;font-size:8.7px;color:#242427;font-weight:normal;transform:scaleX(1.0108);transform-origin:0 0">The responsive touchscreen supports multi-touch gestures including swipe, pinch-to-zoom, and</div>
<div class="t" style="left:448.00px;top:445.68px;font-size:8.7px;color:#242427;font-weight:normal;transform:scaleX(1.0043);transform-origin:0 0">tap-and-hold actions. Users can easily navigate between menus with smooth transitions and</div>
<div class="t" style="left:448.00px;top:457.13px;font-size:8.7px;color:#242427;font-weight:normal;transform:scaleX(1.0088);transform-origin:0 0">intuitive back/forward controls. The interface automatically adjusts button sizes and spacing</div>
<div class="t" style="left:448.00px;top:468.58px;font-size:8.7px;color:#242427;font-weight:normal;transform:scaleX(1.0002);transform-origin:0 0">based on user interaction patterns.</div>
</body></html>
